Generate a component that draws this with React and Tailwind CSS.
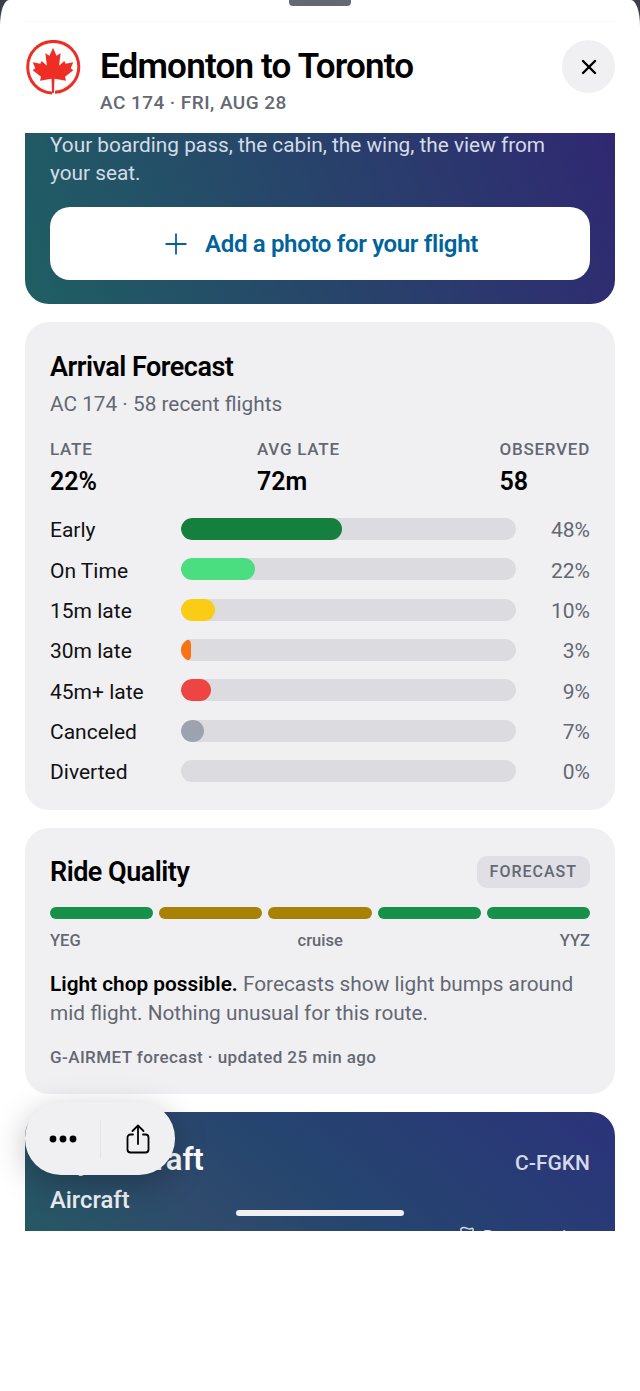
import React from 'react';
import { X, Flag } from 'lucide-react';

const bars = [
  { label: 'Early', pct: 48, color: 'bg-[#15803d]' },
  { label: 'On Time', pct: 22, color: 'bg-[#4ade80]' },
  { label: '15m late', pct: 10, color: 'bg-[#facc15]' },
  { label: '30m late', pct: 3, color: 'bg-[#f97316]' },
  { label: '45m+ late', pct: 9, color: 'bg-[#ef4444]' },
  { label: 'Canceled', pct: 7, color: 'bg-[#9ca3af]' },
  { label: 'Diverted', pct: 0, color: 'bg-[#9ca3af]' },
];

const stats = [
  { label: 'LATE', value: '22%', cls: 'w-[207px]' },
  { label: 'AVG LATE', value: '72m', cls: 'flex-1' },
  { label: 'OBSERVED', value: '58', cls: '' },
];

const rideSegments = ['bg-[#16914a]', 'bg-[#a88204]', 'bg-[#a88204]', 'bg-[#16914a]', 'bg-[#16914a]'];

function MapleLogo() {
  return (
    <svg width="56" height="56" viewBox="0 0 56 56" className="shrink-0">
      <path d="M27 53 C13 52.500 2.700 41 2.700 26.700 C2.700 12.500 14 1.400 28.300 1.400 C42.500 1.400 53.800 12.500 53.800 26.700 C53.800 40.500 43 51.500 30 52.300" fill="none" stroke="#ee2e24" strokeWidth="3" />
      <path d="M28 7.700 L31.500 15.700 L35.700 13.300 L34 25.700 L39.300 21 L40.700 23.700 L48.300 22.300 L45.700 28.300 L48.300 30.300 L40 36.700 L41 40.700 L29.500 38.700 L28.900 53 L27.100 53 L26.500 38.700 L15 40.700 L16 36.700 L7.700 30.300 L10.300 28.300 L7.700 22.300 L15.300 23.700 L16.700 21 L22 25.700 L20.300 13.300 L24.500 15.700 Z" fill="#ee2e24" />
    </svg>
  );
}

function ShareIcon() {
  return (
    <svg width="24" height="30" viewBox="0 0 24 30" fill="none" stroke="currentColor" strokeWidth="1.800" strokeLinecap="round" strokeLinejoin="round" className="text-black">
      <path d="M7 10.500H4.500A3 3 0 0 0 1.500 13.500V25.500A3 3 0 0 0 4.500 28.500H19.500A3 3 0 0 0 22.500 25.500V13.500A3 3 0 0 0 19.500 10.500H17" />
      <path d="M12 20V1.500M6.500 7L12 1.500L17.500 7" />
    </svg>
  );
}

function DotsIcon() {
  return (
    <svg width="30" height="8" viewBox="0 0 30 8" fill="#000">
      <circle cx="5" cy="4" r="3.400" />
      <circle cx="15" cy="4" r="3.400" />
      <circle cx="25" cy="4" r="3.400" />
    </svg>
  );
}

export default function App() {
  return (
    <div className="relative w-[640px] h-[1391px] bg-white font-['Roboto',sans-serif] overflow-hidden">
      {/* dark corners behind the sheet */}
      <div className="bg-[#3a3f4a] h-[1231px] overflow-hidden">
        <div className="bg-white h-full rounded-tl-[9px_26px] rounded-tr-[9px_26px] flex flex-col overflow-hidden">
          {/* Header */}
          <div className="h-[133px] shrink-0 px-[25px] relative">
            <div className="w-[62px] h-[6px] bg-[#636873] rounded-b-[4px] mx-auto" />
            <div className="h-px bg-[#f7f7f8] mt-[15px]" />
            <div className="flex items-start mt-[18px]">
              <MapleLogo />
              <div className="ml-[19px] flex-1">
                <div className="text-[35px] leading-[50px] font-semibold text-black tracking-[-0.8px] mt-[2px]">Edmonton to Toronto</div>
                <div className="text-[19px] leading-[24px] font-medium text-[#636873] tracking-[0.45px] -mt-[1px]">AC 174 · FRI, AUG 28</div>
              </div>
              <button className="w-[53px] h-[53px] rounded-full bg-[#f0f0f2] flex items-center justify-center">
                <X size={24} strokeWidth={2.4} className="text-black" />
              </button>
            </div>
          </div>

          {/* Scroll content */}
          <div className="px-[25px] flex flex-col gap-[18px]">
            {/* Photo card */}
            <div className="h-[171px] rounded-b-[24px] bg-linear-[70deg,#1f5f63,#302872] px-[25px] shrink-0">
              <p className="text-[20.800px] leading-[28px] text-[#d5dbe6] -mt-[2px]">Your boarding pass, the cabin, the wing, the view from your seat.</p>
              <button className="w-full h-[73px] bg-white rounded-[20px] mt-[20px] pr-[4px] flex items-center justify-center gap-[11px] text-[#00639c]">
                <svg width="36" height="36" viewBox="0 0 24 24" fill="none" stroke="currentColor" strokeWidth="1.200">
                  <path d="M5 12H19M12 5V19" />
                </svg>
                <span className="text-[24px] font-semibold tracking-[-0.33px]">Add a photo for your flight</span>
              </button>
            </div>

            {/* Arrival forecast */}
            <div className="h-[488px] rounded-[24px] bg-[#f0f0f2] px-[25px] pt-[27px] shrink-0">
              <h2 className="text-[27px] leading-[36px] font-semibold text-black tracking-[-0.5px]">Arrival Forecast</h2>
              <p className="text-[20.800px] leading-[28px] text-[#636873] mt-[5px]">AC 174 · 58 recent flights</p>
              <div className="flex mt-[21px]">
                {stats.map((s) => (
                  <div key={s.label} className={s.cls}>
                    <div className="text-[17px] leading-[20px] font-medium text-[#636873] tracking-[0.75px]">{s.label}</div>
                    <div className="text-[25px] leading-[32px] font-semibold text-black mt-[7px]">{s.value}</div>
                  </div>
                ))}
              </div>
              <div className="flex flex-col gap-[18.330px] mt-[20px]">
                {bars.map((b) => (
                  <div key={b.label} className="flex items-center h-[22px]">
                    <div className="w-[131px] text-[21px] text-[#111] shrink-0 pt-[4px]">{b.label}</div>
                    <div className="w-[335px] h-[22px] rounded-full bg-[#dcdce0] overflow-hidden shrink-0">
                      <div className={`h-full rounded-full ${b.color}`} style={{ width: `${b.pct}%` }} />
                    </div>
                    <div className="flex-1 text-right text-[21px] text-[#636873] pt-[4px]">{b.pct}%</div>
                  </div>
                ))}
              </div>
            </div>

            {/* Ride quality */}
            <div className="h-[266px] rounded-[24px] bg-[#f0f0f2] px-[25px] pt-[27px] shrink-0">
              <div className="flex items-center justify-between">
                <h2 className="text-[27px] leading-[34px] font-semibold text-black tracking-[-0.5px]">Ride Quality</h2>
                <span className="h-[32px] px-[13px] rounded-[10px] bg-[#dfdfe5] text-[16px] leading-[32px] font-medium text-[#636873] tracking-[1px]">FORECAST</span>
              </div>
              <div className="flex gap-[6px] mt-[18px]">
                {rideSegments.map((c, i) => (
                  <div key={i} className={`flex-1 h-[12px] rounded-full ${c}`} />
                ))}
              </div>
              <div className="flex justify-between mt-[11px] text-[16.500px] leading-[22px] font-medium text-[#636873]">
                <span>YEG</span>
                <span>cruise</span>
                <span>YYZ</span>
              </div>
              <p className="text-[20.800px] leading-[29px] text-[#636873] mt-[18px]">
                <span className="font-semibold text-black">Light chop possible.</span> Forecasts show light bumps around mid flight. Nothing unusual for this route.
              </p>
              <p className="text-[17px] leading-[22px] font-medium text-[#636873] mt-[18px] tracking-[0.42px]">G-AIRMET forecast · updated 25 min ago</p>
            </div>

            {/* My aircraft */}
            <div className="h-[140px] rounded-t-[24px] bg-linear-[40deg,#245a62,#2f4a6c_30%,#25456f_50%,#2b337b] px-[25px] pt-[29px] shrink-0 relative">
              <div className="flex justify-between items-start">
                <h2 className="text-[31px] leading-[38px] font-semibold text-white tracking-[-0.1px]">My Aircraft</h2>
                <span className="text-[21px] leading-[28px] font-medium text-[#d5dbe6] mt-[8px]">C-FGKN</span>
              </div>
              <div className="text-[23.800px] leading-[32px] font-medium text-[#eef0f4] mt-[5px]">Aircraft</div>
              <div className="absolute right-[25px] top-[114px] flex items-start gap-[7px] text-[17px] leading-[18px] text-[#d5dbe6]">
                <Flag size={18} />
                <span className="mt-[1px]">Report update</span>
              </div>
            </div>
          </div>
        </div>
      </div>

      {/* Floating action pill */}
      <div className="absolute left-[25px] top-[1102px] w-[150px] h-[73px] rounded-[36px] bg-[#f0f0f2] flex items-center shadow-[0_8px_32px_rgba(0,0,0,0.25)]">
        <div className="w-[75px] flex justify-center">
          <DotsIcon />
        </div>
        <div className="w-px h-[38px] bg-[#e4e4e8]" />
        <div className="flex-1 flex justify-center">
          <ShareIcon />
        </div>
      </div>

      {/* Home indicator */}
      <div className="absolute left-[236px] top-[1210px] w-[168px] h-[6px] rounded-full bg-[#f0f0f2]" />
    </div>
  );
}
